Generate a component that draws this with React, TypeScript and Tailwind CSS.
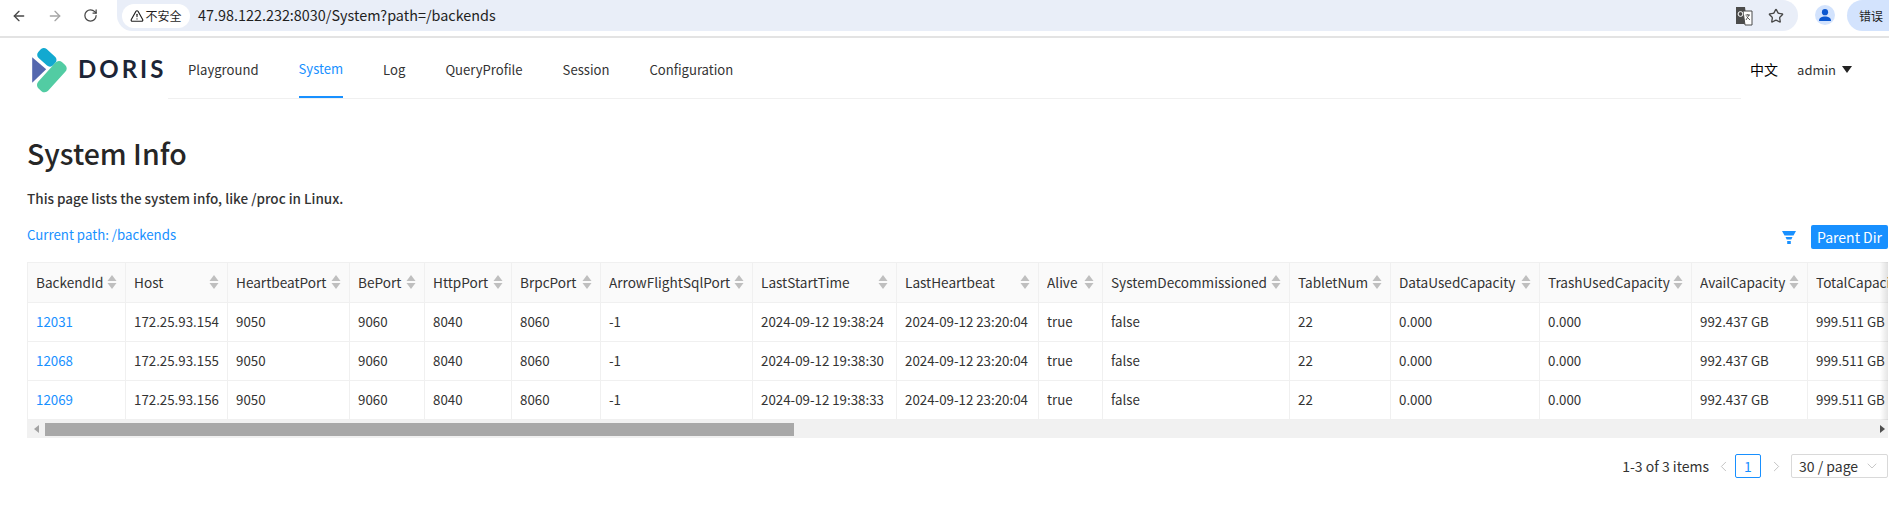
import { ArrowLeft, ArrowRight, RotateCw, TriangleAlert, Star, ChevronLeft, ChevronRight, ChevronDown } from "lucide-react";

const COLUMNS = [
  { name: "BackendId", width: "w-[98px]" },
  { name: "Host", width: "w-[102px]" },
  { name: "HeartbeatPort", width: "w-[122px]" },
  { name: "BePort", width: "w-[75px]" },
  { name: "HttpPort", width: "w-[87px]" },
  { name: "BrpcPort", width: "w-[89px]" },
  { name: "ArrowFlightSqlPort", width: "w-[152px]" },
  { name: "LastStartTime", width: "w-[144px]" },
  { name: "LastHeartbeat", width: "w-[142px]" },
  { name: "Alive", width: "w-[64px]" },
  { name: "SystemDecommissioned", width: "w-[187px]" },
  { name: "TabletNum", width: "w-[101px]" },
  { name: "DataUsedCapacity", width: "w-[149px]" },
  { name: "TrashUsedCapacity", width: "w-[152px]" },
  { name: "AvailCapacity", width: "w-[116px]" },
  { name: "TotalCapacity", width: "w-[116px]" },
];

const ROWS = [
  ["12031", "172.25.93.154", "9050", "9060", "8040", "8060", "-1", "2024-09-12 19:38:24", "2024-09-12 23:20:04", "true", "false", "22", "0.000", "0.000", "992.437 GB", "999.511 GB"],
  ["12068", "172.25.93.155", "9050", "9060", "8040", "8060", "-1", "2024-09-12 19:38:30", "2024-09-12 23:20:04", "true", "false", "22", "0.000", "0.000", "992.437 GB", "999.511 GB"],
  ["12069", "172.25.93.156", "9050", "9060", "8040", "8060", "-1", "2024-09-12 19:38:33", "2024-09-12 23:20:04", "true", "false", "22", "0.000", "0.000", "992.437 GB", "999.511 GB"],
];

const NAV = ["Playground", "System", "Log", "QueryProfile", "Session", "Configuration"];

function SortCarets() {
  return (
    <svg width="10" height="16" viewBox="0 0 10 16" className="shrink-0">
      <path d="M5 1 L9.5 7 H0.5 Z" fill="#bfbfbf" />
      <path d="M5 15 L9.5 9 H0.5 Z" fill="#bfbfbf" />
    </svg>
  );
}

function Logo() {
  return (
    <svg width="37" height="48" viewBox="30 48 110 144" className="mt-[3px] shrink-0">
      <rect x="47" y="64" width="60" height="36" rx="13" fill="#12a9d0" transform="rotate(42 77 82)" />
      <path d="M33 82 L75 118 L33 158 Z" fill="#5467ae" />
      <rect x="39" y="120" width="106" height="40" rx="14" fill="#52cca3" transform="rotate(-48 92 140)" />
    </svg>
  );
}

function TranslateIcon() {
  return (
    <svg width="18" height="20" viewBox="0 0 18 20">
      <path d="M1 1 H10 L12 18 H1 Z" fill="#4b4b4b" />
      <path d="M8 5 H17 V19 H10 Z" fill="#fff" stroke="#4b4b4b" strokeWidth="1" />
      <circle cx="5.5" cy="8" r="2.4" fill="none" stroke="#fff" strokeWidth="1" />
      <path d="M10.5 9 H15 M12.8 8 V9 M14 9 L11 14 M11.5 10.5 L15 14" stroke="#4b4b4b" strokeWidth="0.9" fill="none" />
    </svg>
  );
}

function BrowserBar() {
  return (
    <div className="flex h-[38px] border-b-2 border-[#e3e3e3] text-[#1f1f1f]">
      <div className="flex w-[117px] shrink-0 items-start pl-[11px] pt-[8px] gap-[20px]">
        <ArrowLeft size={16} strokeWidth={2} className="text-[#474747]" />
        <ArrowRight size={16} strokeWidth={2} className="text-[#a5a5a5]" />
        <RotateCw size={15} strokeWidth={2} className="text-[#474747]" />
      </div>
      <div className="flex h-[31px] w-[1681px] items-center rounded-r-[16px] rounded-bl-[16px] bg-[#e9eef8] pl-[5px]">
        <div className="flex h-[24px] w-[68px] items-center justify-center gap-[1px] rounded-full bg-white text-[12px]">
          <TriangleAlert size={14} strokeWidth={2} />
          <span>不安全</span>
        </div>
        <span className="ml-[8px] text-[14.4px] leading-none">47.98.122.232:8030/System?path=/backends</span>
        <div className="ml-auto flex items-center gap-[15px] pr-[14px]">
          <TranslateIcon />
          <Star size={16} strokeWidth={2} className="text-[#474747]" />
        </div>
      </div>
      <div className="ml-[17px] mt-[5px] flex h-[20px] w-[20px] shrink-0 items-center justify-center overflow-hidden rounded-full bg-[#d3e3fd]">
        <svg width="14" height="14" viewBox="0 0 14 14">
          <circle cx="7" cy="4.2" r="3.1" fill="#0b57d0" />
          <path d="M1 13 C1 9.5 4 8.5 7 8.5 C10 8.5 13 9.5 13 13 Z" fill="#0b57d0" />
        </svg>
      </div>
      <div className="ml-[12px] flex h-[31px] flex-1 items-center rounded-l-[16px] bg-[#d3e3fd] pl-[12px] text-[12px]">错误</div>
    </div>
  );
}

function NavBar() {
  return (
    <div className="flex h-[61px] items-stretch pl-[31px] pr-[37px]">
      <div className="flex w-[137px] shrink-0 items-center gap-[10px]">
        <Logo />
        <span className="font-['Lato'] text-[24px] font-bold leading-none tracking-[3px] text-[#1c2536]">DORIS</span>
      </div>
      <div className="flex flex-1 items-stretch gap-[40px] border-b border-[#f0f0f0] pl-[20px] text-[13.1px] text-[#333]">
        {NAV.map(item => (
          <div
            key={item}
            className={`flex items-center pt-[3px] ${item === "System" ? "border-b-2 border-[#1890ff] text-[#1890ff]" : ""}`}
          >
            {item}
          </div>
        ))}
      </div>
      <div className="flex w-[111px] shrink-0 items-center justify-end gap-[19px] pt-[2px] text-[13px] text-[#333]">
        <span className="text-[14px] text-black">中文</span>
        <span className="flex items-center gap-[6px]">
          admin
          <svg width="10" height="7" viewBox="0 0 10 7">
            <path d="M0 0 H10 L5 7 Z" fill="#222" />
          </svg>
        </span>
      </div>
    </div>
  );
}

function DataTable() {
  return (
    <div className="relative overflow-hidden">
      <table className="w-[1863px] table-fixed border-collapse text-[13.3px] text-[#333]">
        <colgroup>
          {COLUMNS.map(col => (
            <col key={col.name} className={col.width} />
          ))}
        </colgroup>
        <thead>
          <tr className="h-[40px] border-y border-[#f0f0f0] bg-[#fafafa]">
            {COLUMNS.map((col, i) => (
              <th key={col.name} className={`border-r border-[#f0f0f0] px-[8px] font-medium ${i === 0 ? "border-l" : ""}`}>
                <div className="flex items-center justify-between overflow-hidden whitespace-nowrap text-left text-[13.6px] font-normal">
                  <span>{col.name}</span>
                  {i < 15 && <SortCarets />}
                </div>
              </th>
            ))}
          </tr>
        </thead>
        <tbody>
          {ROWS.map(row => (
            <tr key={row[0]} className="h-[39px] border-b border-[#f0f0f0]">
              {row.map((cell, i) => (
                <td
                  key={i}
                  className={`overflow-hidden whitespace-nowrap border-r border-[#f0f0f0] px-[8px] ${i === 0 ? "border-l text-[#1890ff]" : ""}`}
                >
                  {cell}
                </td>
              ))}
            </tr>
          ))}
        </tbody>
      </table>
      {/* scrollbar */}
      <div className="flex h-[18px] items-center bg-[#f1f1f1]">
        <div className="flex w-[18px] shrink-0 justify-center">
          <svg width="5" height="8" viewBox="0 0 5 8">
            <path d="M5 0 V8 L0 4 Z" fill="#a3a3a3" />
          </svg>
        </div>
        <div className="h-[13px] w-[749px] bg-[#a8a8a8]" />
        <div className="ml-auto flex w-[12px] shrink-0 justify-center">
          <svg width="5" height="8" viewBox="0 0 5 8">
            <path d="M0 0 V8 L5 4 Z" fill="#505050" />
          </svg>
        </div>
      </div>
      <div className="absolute right-0 top-0 h-[158px] w-[8px] bg-gradient-to-l from-[#0000001a] to-transparent" />
    </div>
  );
}

function Pagination() {
  return (
    <div className="mt-[16px] flex items-center justify-end text-[14px] text-[#333]">
      <span className="mr-[6px]">1-3 of 3 items</span>
      <ChevronLeft size={17} strokeWidth={1.3} className="text-[#bfbfbf]" />
      <span className="mx-[3px] flex h-[24px] w-[26px] items-center justify-center rounded-[2px] border border-[#1890ff] text-[#1890ff]">1</span>
      <ChevronRight size={17} strokeWidth={1.3} className="ml-[4px] text-[#bfbfbf]" />
      <div className="ml-[6px] flex h-[24px] w-[97px] items-center justify-between rounded-[2px] border border-[#d9d9d9] pl-[7px] pr-[7px]">
        <span>30 / page</span>
        <ChevronDown size={16} strokeWidth={1.3} className="text-[#bfbfbf]" />
      </div>
    </div>
  );
}

export default function App() {
  return (
    <div className="h-[526px] w-[1889px] overflow-hidden bg-white font-['Noto_Sans_CJK_SC',sans-serif]">
      <BrowserBar />
      <NavBar />
      <div className="pl-[27px] pr-px pt-[35px]">
        <h1 className="text-[28.5px] font-medium leading-[38px] text-[#262626]">System Info</h1>
        <p className="mt-[15px] text-[13.5px] font-medium leading-[22px] text-[#333]">This page lists the system info, like /proc in Linux.</p>
        <div className="mt-[14px] flex h-[24px] items-center">
          <span className="text-[13.25px] text-[#1890ff]">Current path: /backends</span>
          <svg width="14" height="13" viewBox="0 0 14 13" className="ml-auto mr-[15px] mt-[4px]">
            <path d="M0 0 H14 L11.5 4.5 H2.5 Z M3.5 6 H10.5 L9.3 8.5 H4.7 Z M5.2 10 H8.8 V13 H5.2 Z" fill="#1890ff" />
          </svg>
          <button className="mt-[4px] h-[24px] w-[77px] rounded-[2px] bg-[#1890ff] text-[14px] text-white">Parent Dir</button>
        </div>
        <div className="mt-[15px]">
          <DataTable />
        </div>
        <Pagination />
      </div>
    </div>
  );
}
